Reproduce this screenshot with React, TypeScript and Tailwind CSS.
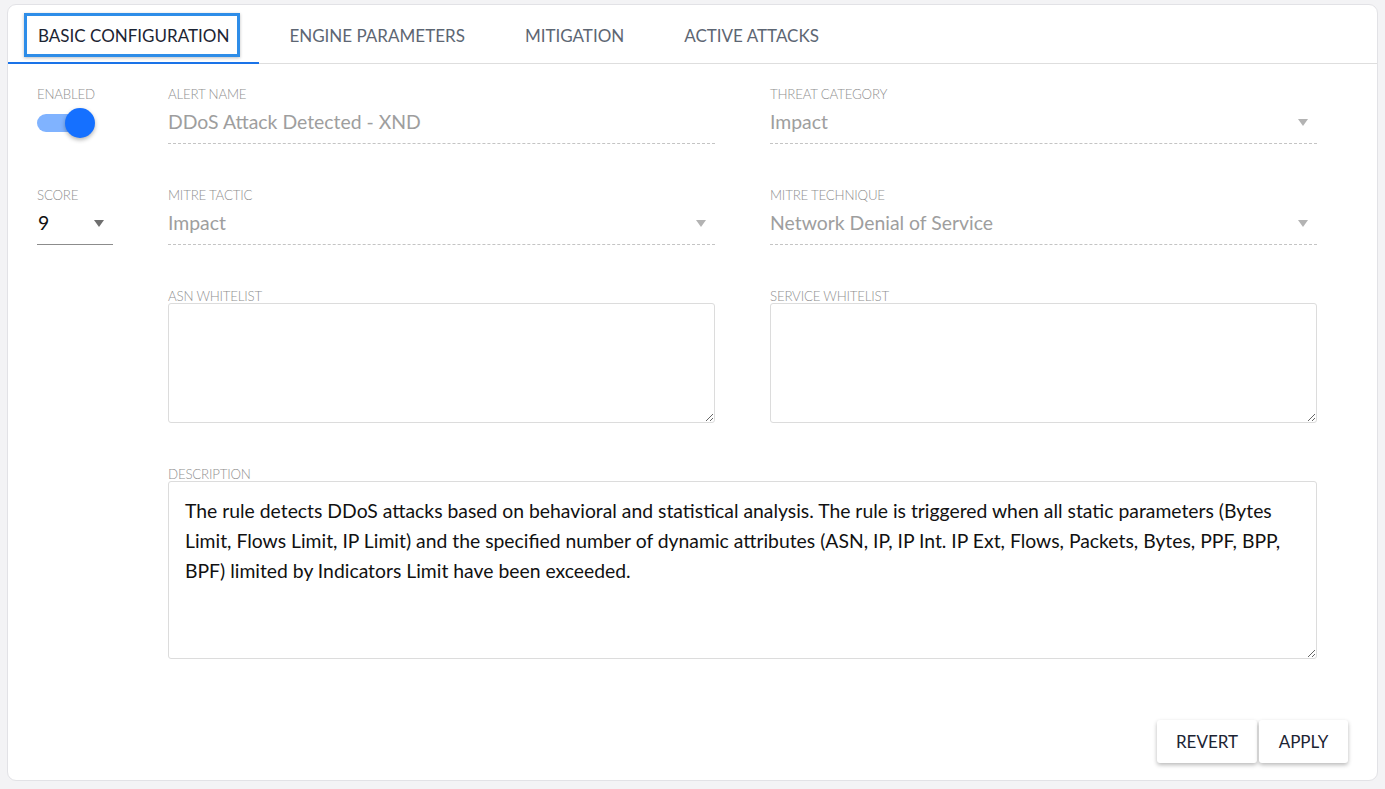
import React from 'react';

const tabs = ['BASIC CONFIGURATION', 'ENGINE PARAMETERS', 'MITIGATION', 'ACTIVE ATTACKS'];

const Caret = ({ dark = false }: { dark?: boolean }) => (
  <svg width="10" height="7" viewBox="0 0 10 7" className="shrink-0">
    <path d="M0 0 L10 0 L5 7 Z" fill={dark ? '#6f6f6f' : '#b3b3b3'} />
  </svg>
);

const Label = ({ children }: { children: React.ReactNode }) => (
  <div className="text-[13.3px] leading-[15px] pt-[1px] -mb-[1px] font-light text-[#8f8f8f] uppercase tracking-[-0.2px]">{children}</div>
);

const DashedField = ({ label, value, select = false }: { label: string; value: string; select?: boolean }) => (
  <div>
    <Label>{label}</Label>
    <div className="h-[43px] flex items-center justify-between border-b border-dashed border-[#c4c4c4] pr-[9px]">
      <span className="text-[19.4px] text-[#9e9e9e]">{value}</span>
      {select && <Caret />}
    </div>
  </div>
);

const Area = ({ label, value, height, className = '' }: { label: string; value?: string; height: string; className?: string }) => (
  <div className={className}>
    <Label>{label}</Label>
    <textarea
      defaultValue={value}
      className={`block w-full ${height} border border-[#dcdcdc] rounded-[3px] px-4 py-[14px] text-[19.35px] leading-[30px] text-[#111] outline-none`}
      style={{ fontFamily: 'Lato, sans-serif' }}
    />
  </div>
);

export default function App() {
  return (
    <div className="min-h-screen bg-[#f3f3f5] pt-[4px] px-[7px]" style={{ fontFamily: 'Lato, "Noto Sans", sans-serif' }}>
      <div className="h-[777px] bg-white border border-[#e2e2e6] rounded-[9px] flex flex-col">
        {/* Tabs */}
        <div className="flex h-[59px] border-b border-[#dedede]">
          {tabs.map((t, i) => (
            <div key={t} className="relative flex items-center px-[30px] pt-[3px]">
              <span className={`text-[17px] ${i === 0 ? 'text-[#1c2433]' : 'text-[#5d6673]'}`}>{t}</span>
              {i === 0 && (
                <>
                  <div className="absolute left-[16px] right-[19px] top-[8px] h-[44px] border-[3px] border-[#2e8de8] shadow-[0_1px_3px_rgba(0,0,0,0.25)]" />
                  <div className="absolute left-0 right-0 bottom-[-1px] h-[2px] bg-[#1a73e8]" />
                </>
              )}
            </div>
          ))}
        </div>

        {/* Form */}
        <div className="pl-[29px] pt-[22px] grid grid-cols-[76px_547px_547px] gap-x-[55px] gap-y-[43px]">
          <div>
            <Label>Enabled</Label>
            <div className="h-[43px] flex items-center">
              <div className="relative w-[57px] h-[30px] flex items-center">
                <div className="w-[52px] h-[18px] rounded-full bg-[#80b3ff]" />
                <div className="absolute right-[-1px] top-0 w-[30px] h-[30px] rounded-full bg-[#1570ff] shadow-[0_2px_4px_rgba(0,0,0,0.3)]" />
              </div>
            </div>
          </div>
          <DashedField label="Alert Name" value="DDoS Attack Detected - XND" />
          <DashedField label="Threat Category" value="Impact" select />

          <div>
            <Label>Score</Label>
            <div className="h-[43px] flex items-center justify-between border-b border-[#8c8c8c] pl-[1px] pr-[9px]">
              <span className="text-[19.4px] text-[#111]">9</span>
              <Caret dark />
            </div>
          </div>
          <DashedField label="Mitre Tactic" value="Impact" select />
          <DashedField label="Mitre Technique" value="Network Denial of Service" select />

          <div />
          <Area label="ASN Whitelist" height="h-[120px]" />
          <Area label="Service Whitelist" height="h-[120px]" />

          <div />
          <Area
            label="Description"
            height="h-[178px]"
            className="col-span-2"
            value="The rule detects DDoS attacks based on behavioral and statistical analysis. The rule is triggered when all static parameters (Bytes Limit, Flows Limit, IP Limit) and the specified number of dynamic attributes (ASN, IP, IP Int. IP Ext, Flows, Packets, Bytes, PPF, BPP, BPF) limited by Indicators Limit have been exceeded."
          />
        </div>

        {/* Actions */}
        <div className="flex justify-end gap-[2px] pr-[29px] mt-[61px]">
          <button className="w-[100px] h-[43px] rounded-[3px] bg-white text-[17px] text-[#1c2433] shadow-[0_2px_4px_rgba(0,0,0,0.28)]">
            REVERT
          </button>
          <button className="w-[89px] h-[43px] rounded-[3px] bg-white text-[17px] text-[#1c2433] shadow-[0_2px_4px_rgba(0,0,0,0.28)]">
            APPLY
          </button>
        </div>
      </div>
    </div>
  );
}
